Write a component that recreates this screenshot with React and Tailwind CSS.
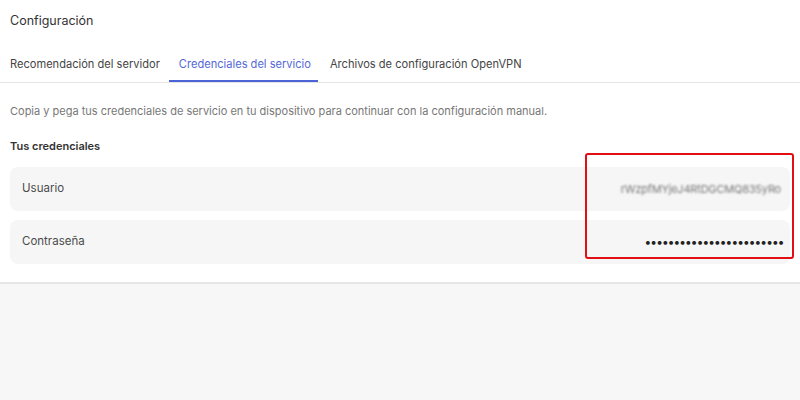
import React from 'react';

const tabs = [
    { label: "Recomendación del servidor", active: false },
    { label: "Credenciales del servicio", active: true },
    { label: "Archivos de configuración OpenVPN", active: false }
];

const CredentialRow = ({ label, children }) => (
    <div className="h-[44px] rounded-lg bg-[#f6f6f6] flex items-center justify-between pl-3 pr-[6px]">
        <span className="text-[11.5px] text-[#4b4b4b]">{label}</span>
        {children}
    </div>
);

const App = () => {
    return (
        <div className="w-[800px] h-[400px] bg-[#f7f7f7] overflow-hidden" style={{ fontFamily: "Inter, 'Noto Sans', sans-serif" }}>
            <div className="bg-white border-b-2 border-[#e6e6e6] h-[284px]">
                <h1 className="text-[12.5px] text-[#333] pl-[10px] pt-[12px] leading-[18px]">Configuración</h1>

                <div className="mt-[26px] flex border-b border-[#e4e4e4] pl-[10px] gap-[19px]">
                    {tabs.map((t, i) => (
                        <div
                            key={i}
                            className={
                                t.active
                                    ? "text-[11.1px] text-[#5468d8] h-[26px] border-b-2 border-[#4a63d6] -mb-px pl-[10px] pr-[7px] -ml-[10px] -mr-[7px]"
                                    : "text-[11.1px] text-[#444] h-[26px]"
                            }
                        >
                            {t.label}
                        </div>
                    ))}
                </div>

                <p className="text-[11px] text-[#777] pl-[10px] mt-[20px] leading-[16px]">
                    Copia y pega tus credenciales de servicio en tu dispositivo para continuar con la configuración manual.
                </p>

                <h2 className="text-[11px] font-semibold text-[#333] pl-[10px] mt-[19px] leading-[16px]">Tus credenciales</h2>

                <div className="relative mx-[10px] mt-[13px] flex flex-col gap-[9px]">
                    <CredentialRow label="Usuario">
                        <span className="text-[11px] text-[#777] blur-[1.2px] tracking-[-0.2px] mr-[3px]">rWzpfMYjeJ4RtDGCMQ835yRo</span>
                    </CredentialRow>
                    <CredentialRow label="Contraseña">
                        <span className="text-[12px] text-[#222] tracking-[0.1px] font-bold">••••••••••••••••••••••••</span>
                    </CredentialRow>
                    <div className="absolute left-[575px] top-[-14px] w-[209px] h-[106px] border-[2.5px] border-[#e10f13] rounded-[3px]" />
                </div>
            </div>
        </div>
    );
};

export default App;
